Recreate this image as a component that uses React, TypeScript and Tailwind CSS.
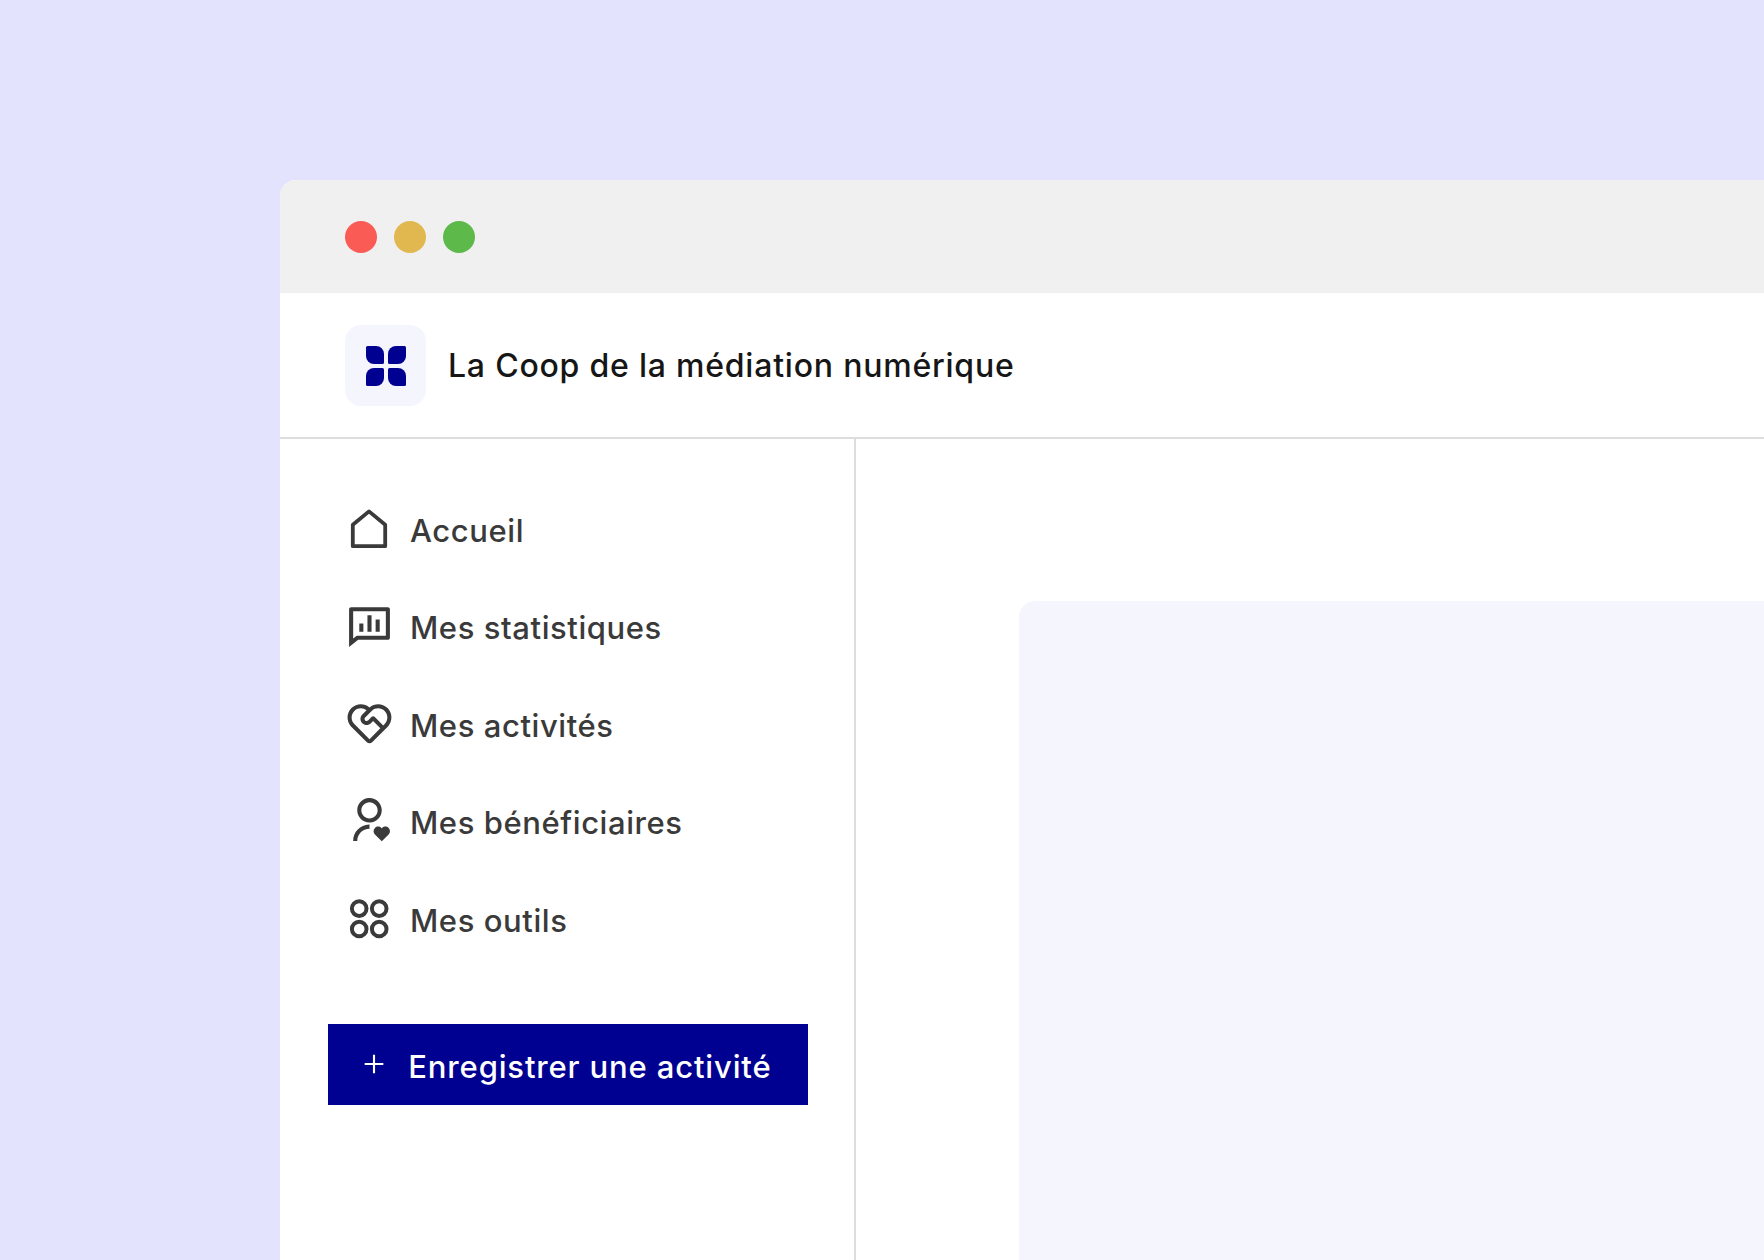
import { ReactNode } from 'react';
import { RiChatPollLine, RiServiceLine, RiUserHeartLine } from 'react-icons/ri';

function HomeIcon() {
  return (
    <svg viewBox="0 0 24 24" className="h-12 w-12" fill="none" stroke="currentColor" strokeWidth="1.9" strokeLinejoin="round">
      <path d="M3.9 21.1V10.4L12 3.7l8.1 6.7v10.7z" />
    </svg>
  );
}

function ToolsIcon() {
  return (
    <svg viewBox="0 0 24 24" className="h-12 w-12" fill="none" stroke="currentColor" strokeWidth="2">
      <circle cx="7.1" cy="7.3" r="3.65" />
      <circle cx="17.1" cy="7.3" r="3.65" />
      <circle cx="7.1" cy="17.5" r="3.65" />
      <circle cx="17.1" cy="17.5" r="3.65" />
    </svg>
  );
}

function Logo() {
  return (
    <svg viewBox="0 0 40 40" className="h-10 w-10" fill="#000091">
      <path d="M1.5 0H10a8 8 0 0 1 8 8v8.5a1.5 1.5 0 0 1-1.5 1.5H8a8 8 0 0 1-8-8V1.5A1.5 1.5 0 0 1 1.5 0z" />
      <path d="M38.5 0H30a8 8 0 0 0-8 8v8.5a1.5 1.5 0 0 0 1.5 1.5H32a8 8 0 0 0 8-8V1.5A1.5 1.5 0 0 0 38.5 0z" />
      <path d="M1.5 40H10a8 8 0 0 0 8-8v-8.5a1.5 1.5 0 0 0-1.5-1.5H8a8 8 0 0 0-8 8v8.5A1.5 1.5 0 0 0 1.5 40z" />
      <path d="M38.5 40H30a8 8 0 0 1-8-8v-8.5a1.5 1.5 0 0 1 1.5-1.5H32a8 8 0 0 1 8 8v8.5a1.5 1.5 0 0 1-1.5 1.5z" />
    </svg>
  );
}

function NavItem({ icon, label }: { icon: ReactNode; label: string }) {
  return (
    <div className="flex h-[97.5px] items-center gap-[17px] pl-[65px] text-[31px] font-[450] tracking-[0.58px] text-[#3a3a3a]">
      <span className="grid h-12 w-12 place-items-center">{icon}</span>
      <span className="translate-y-[3px]">{label}</span>
    </div>
  );
}

export default function App() {
  return (
    <div className="h-[1260px] w-full overflow-hidden bg-[#e3e3fd] pl-[280px] pt-[180px] font-['Inter',sans-serif]">
      <div className="h-full overflow-hidden rounded-tl-[16px] bg-white">
        <div className="flex h-[113px] items-center gap-[17px] bg-[#f0f0f0] pl-[65px] pt-[1px]">
          <span className="h-8 w-8 rounded-full bg-[#fa5c55]" />
          <span className="h-8 w-8 rounded-full bg-[#e0b84f]" />
          <span className="h-8 w-8 rounded-full bg-[#5cb94a]" />
        </div>
        <div className="flex h-[146px] items-center gap-[22px] border-b-2 border-[#dddddd] pl-[65px] pt-[1px]">
          <div className="grid h-[81px] w-[81px] place-items-center rounded-[16px] bg-[#f5f5fe]">
            <Logo />
          </div>
          <span className="text-[32px] font-[450] tracking-[0.78px] text-[#161616]">La Coop de la médiation numérique</span>
        </div>
        <div className="flex h-[821px]">
          <aside className="w-[576px] border-r-2 border-[#dddddd] pt-[40px]">
            <NavItem icon={<HomeIcon />} label="Accueil" />
            <NavItem icon={<RiChatPollLine size={49} />} label="Mes statistiques" />
            <NavItem icon={<RiServiceLine size={49} />} label="Mes activités" />
            <NavItem icon={<RiUserHeartLine size={49} />} label="Mes bénéficiaires" />
            <NavItem icon={<ToolsIcon />} label="Mes outils" />
            <button className="ml-[48.3px] mt-[57px] flex h-[81px] w-[479.5px] items-center gap-[18px] bg-[#000091] pl-[30px] text-[31px] font-[450] tracking-[0.85px] text-white">
              <svg viewBox="0 0 24 24" className="h-8 w-8" fill="none" stroke="currentColor" strokeWidth="1.6">
                <path d="M12 5v14M5 12h14" />
              </svg>
              <span className="translate-y-[3px]">Enregistrer une activité</span>
            </button>
          </aside>
          <main className="flex-1 pl-[163px] pt-[162px]">
            <div className="h-full rounded-tl-[16px] bg-[#f5f5fe]" />
          </main>
        </div>
      </div>
    </div>
  );
}
